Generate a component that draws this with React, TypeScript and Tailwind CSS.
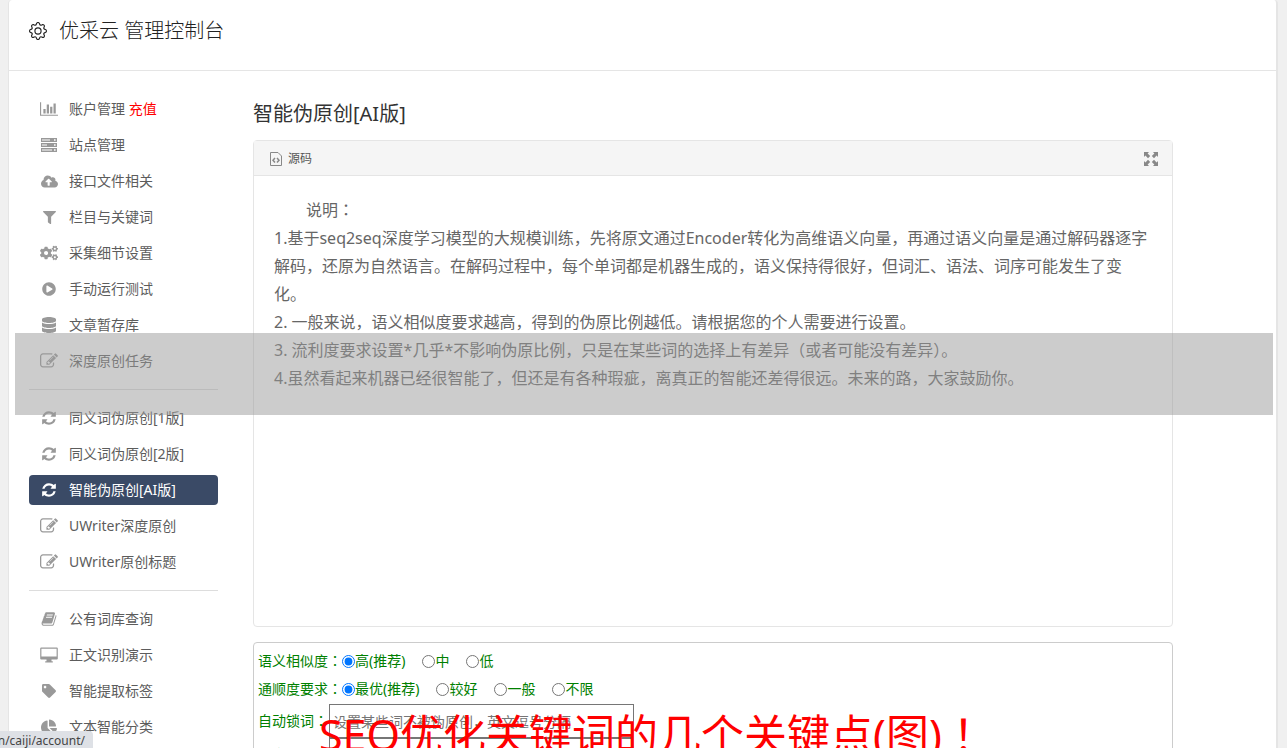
import React from 'react';
import { FaChartPie, FaCloudUploadAlt, FaCogs, FaDatabase, FaFilter, FaPlayCircle, FaTag } from 'react-icons/fa';
import { BsGear } from 'react-icons/bs';

type MenuItem = {
    label: string;
    icon: React.ReactNode;
    extra?: string;
    active?: boolean;
};

type RadioGroup = {
    name: string;
    label: string;
    options: string[];
};

const BarChartIcon = () => (
    <svg viewBox="0 0 2048 1792" width="18" height="16" fill="currentColor">
        <path d="M640 896v512h-256v-512h256zm384-512v1024h-256v-1024h256zm1024 1152v128h-2048v-1536h128v1408h1920zm-640-896v768h-256v-768h256zm384-384v1152h-256v-1152h256z" />
    </svg>
);

const ServerIcon = () => (
    <svg viewBox="0 0 16 14" width="16" height="14" fill="currentColor">
        <path fillRule="evenodd" d="M0 0h16v4H0zM1 1.4v1.2h8V1.4zM13 1.2v1.6h1.6V1.2zM0 5h16v4H0zM1 6.4v1.2h5V6.4zM13 6.2v1.6h1.6V6.2zM0 10h16v4H0zM1 11.4v1.2h10v-1.2zM13 11.2v1.6h1.6v-1.6z" />
    </svg>
);

const EditIcon = () => (
    <svg viewBox="0 0 1792 1792" width="18" height="18" fill="currentColor">
        <path d="M888 1184l116-116-152-152-116 116v56h96v96h56zm440-720q-16-16-33 1l-350 350q-17 17-1 33t33-1l350-350q17-17 1-33zm80 594v190q0 119-84.5 203.5t-203.5 84.5h-832q-119 0-203.5-84.5t-84.5-203.5v-832q0-119 84.5-203.5t203.5-84.5h832q63 0 117 25 15 7 18 23 3 17-9 29l-49 49q-14 14-32 8-23-6-45-6h-832q-66 0-113 47t-47 113v832q0 66 47 113t113 47h832q66 0 113-47t47-113v-126q0-13 9-22l64-64q15-15 35-7t20 29zm-96-738l288 288-672 672h-288v-288zm444 132l-92 92-288-288 92-92q28-28 68-28t68 28l152 152q28 28 28 68t-28 68z" />
    </svg>
);

const RefreshIcon = () => (
    <svg viewBox="0 0 1792 1792" width="16" height="16" fill="currentColor">
        <path d="M1639 1056q0 5-1 7-64 268-268 434.5t-478 166.5q-146 0-282.5-55t-243.5-157l-129 129q-19 19-45 19t-45-19-19-45v-448q0-26 19-45t45-19h448q26 0 45 19t19 45-19 45l-137 137q71 66 161 102t187 36q134 0 250-65t186-179q11-17 53-117 8-23 30-23h192q13 0 22.5 9.5t9.5 22.5zm25-800v448q0 26-19 45t-45 19h-448q-26 0-45-19t-19-45 19-45l138-138q-148-137-349-137-134 0-250 65t-186 179q-11 17-53 117-8 23-30 23h-199q-13 0-22.5-9.5t-9.5-22.5v-7q65-268 270-434.5t480-166.5q146 0 284 55.5t245 156.5l130-129q19-19 45-19t45 19 19 45z" />
    </svg>
);

const BookIcon = () => (
    <svg viewBox="0 0 1792 1792" width="16" height="16" fill="currentColor">
        <path d="M1703 478q40 57 18 129l-275 906q-19 64-76.5 107.5t-122.5 43.5h-923q-77 0-148.5-53.5t-99.5-131.5q-24-67-2-127 0-4 3-27t4-37q1-8-3-21.5t-3-19.5q2-11 8-21t16.5-23.5 16.5-23.5q23-38 45-91.5t30-91.5q3-10 .5-30t-.5-28q3-11 17-28t17-23q21-36 42-92t25-90q1-9-2.5-32t.5-28q4-13 22-30.5t22-22.5q19-26 42.5-84.5t27.5-96.5q1-8-3-25.5t-2-26.5q2-8 9-18t18-23 17-21q8-12 16.5-30.5t15-35 16-36 19.5-32 26.5-23.5 36-11.5 47.5 5.5l-1 3q38-9 51-9h761q74 0 114 56t18 130l-274 906q-36 119-71.5 153.5t-128.5 34.5h-869q-27 0-38 15-11 16-1 43 24 70 144 70h923q29 0 56-15.5t35-41.5l300-987q7-22 5-57 38 15 59 43zm-1064 2q-4 13 2 22.5t20 9.5h608q13 0 25.5-9.5t16.5-22.5l21-64q4-13-2-22.5t-20-9.5h-608q-13 0-25.5 9.5t-16.5 22.5zm-83 256q-4 13 2 22.5t20 9.5h608q13 0 25.5-9.5t16.5-22.5l21-64q4-13-2-22.5t-20-9.5h-608q-13 0-25.5 9.5t-16.5 22.5z" />
    </svg>
);

const DesktopIcon = () => (
    <svg viewBox="0 0 18 16" width="18" height="16" fill="currentColor">
        <path fillRule="evenodd" d="M1.2 0.5h15.6a1 1 0 0 1 1 1v10a1 1 0 0 1-1 1h-5.3v1.7h1.3v1.3H5.2v-1.3h1.3v-1.7H1.2a1 1 0 0 1-1-1v-10a1 1 0 0 1 1-1zM1.4 1.7v7.8h15.2V1.7z" />
    </svg>
);

const FileCodeIcon = () => (
    <svg viewBox="0 0 12 14" width="12" height="14" fill="none" stroke="currentColor">
        <path d="M0.5 0.5h7.5l3.5 3.5v9.5h-11z" />
        <path d="M5 6l-2 2.3 2 2.3M7 6l2 2.3-2 2.3" strokeWidth="1.5" />
    </svg>
);

const ExpandIcon = () => (
    <svg viewBox="0 0 14 14" width="14" height="14" fill="currentColor">
        <path d="M0 0h5L3.6 1.4 6.2 4 4 6.2 1.4 3.6 0 5zM14 0v5l-1.4-1.4L10 6.2 7.8 4l2.6-2.6L9 0zM0 14V9l1.4 1.4L4 7.8 6.2 10l-2.6 2.6L5 14zM14 14H9l1.4-1.4L7.8 10 10 7.8l2.6 2.6L14 9z" />
    </svg>
);

// Full-width colon or exclamation mark that sits in the middle of its cell
const Mark = ({ children }: { children: string }) => (
    <span lang="zh-Hant" className="font-['Noto_Sans_CJK_TC',sans-serif] leading-none">{children}</span>
);

const menuGroups: MenuItem[][] = [
    [
        { label: '账户管理', icon: <BarChartIcon />, extra: '充值' },
        { label: '站点管理', icon: <ServerIcon /> },
        { label: '接口文件相关', icon: <FaCloudUploadAlt size={17} /> },
        { label: '栏目与关键词', icon: <FaFilter size={13} /> },
        { label: '采集细节设置', icon: <FaCogs size={18} /> },
        { label: '手动运行测试', icon: <FaPlayCircle size={14} /> },
        { label: '文章暂存库', icon: <FaDatabase size={16} /> },
        { label: '深度原创任务', icon: <EditIcon /> },
    ],
    [
        { label: '同义词伪原创[1版]', icon: <RefreshIcon /> },
        { label: '同义词伪原创[2版]', icon: <RefreshIcon /> },
        { label: '智能伪原创[AI版]', icon: <RefreshIcon />, active: true },
        { label: 'UWriter深度原创', icon: <EditIcon /> },
        { label: 'UWriter原创标题', icon: <EditIcon /> },
    ],
    [
        { label: '公有词库查询', icon: <BookIcon /> },
        { label: '正文识别演示', icon: <DesktopIcon /> },
        { label: '智能提取标签', icon: <FaTag size={14} /> },
        { label: '文本智能分类', icon: <FaChartPie size={16} /> },
    ],
];

const radioGroups: RadioGroup[] = [
    { name: 'similarity', label: '语义相似度', options: ['高(推荐)', '中', '低'] },
    { name: 'fluency', label: '通顺度要求', options: ['最优(推荐)', '较好', '一般', '不限'] },
];

const Sidebar = () => (
    <nav className="w-[189px] shrink-0">
        {menuGroups.map((group, i) => (
            <ul key={i} className={i > 0 ? 'mt-[7px] space-y-1.5 border-t border-[#ddd] pt-[13px] pb-1.5' : 'space-y-1.5 pb-1.5'}>
                {group.map(item => (
                    <li key={item.label}>
                        <a
                            href="#"
                            className={`flex h-[30px] items-center rounded text-sm ${item.active ? 'bg-[#3a4a66] text-white' : 'text-[#5c5c5c]'}`}
                        >
                            <span className={`flex w-10 justify-center ${item.active ? 'text-white' : 'text-[#999]'}`}>{item.icon}</span>
                            <span>
                                {item.label}
                                {item.extra && <span className="text-[#f00]"> {item.extra}</span>}
                            </span>
                        </a>
                    </li>
                ))}
            </ul>
        ))}
    </nav>
);

const SourcePanel = () => (
    <section className="flex h-[487px] flex-col rounded border border-[#e5e5e5]">
        <div className="flex h-[35px] shrink-0 items-center justify-between border-b border-[#e5e5e5] bg-[#f5f5f5] pt-0.5 pr-3.5 pl-4 text-xs text-[#555]">
            <span className="flex items-center gap-1.5">
                <span className="text-[#888]"><FileCodeIcon /></span>
                源码
            </span>
            <button type="button" aria-label="全屏" className="text-[#888]">
                <ExpandIcon />
            </button>
        </div>
        <div className="px-5 py-5 text-base leading-7 text-[#666]">
            <p className="indent-8">说明<Mark>：</Mark></p>
            <p>1.基于seq2seq深度学习模型的大规模训练，先将原文通过Encoder转化为高维语义向量，再通过语义向量是通过解码器逐字解码，还原为自然语言。在解码过程中，每个单词都是机器生成的，语义保持得很好，但词汇、语法、词序可能发生了变化。</p>
            <p>2. 一般来说，语义相似度要求越高，得到的伪原比例越低。请根据您的个人需要进行设置。</p>
            <p>3. 流利度要求设置*几乎*不影响伪原比例，只是在某些词的选择上有差异（或者可能没有差异）。</p>
            <p>4.虽然看起来机器已经很智能了，但还是有各种瑕疵，离真正的智能还差得很远。未来的路，大家鼓励你。</p>
        </div>
    </section>
);

const OptionsForm = () => (
    <form className="mt-[15px] rounded border border-[#ccc] px-1 py-1 text-sm text-[green]">
        {radioGroups.map(group => (
            <fieldset key={group.name} className="flex h-7 items-center">
                <legend className="contents"><span>{group.label}<Mark>：</Mark></span></legend>
                {group.options.map((option, i) => (
                    <label key={option} className="mr-[17px] flex items-center">
                        <input type="radio" name={group.name} defaultChecked={i === 0} className="size-[13px]" />
                        {option}
                    </label>
                ))}
            </fieldset>
        ))}
        <div className="flex items-center pt-px">
            <label htmlFor="locked" className="w-[71px] whitespace-nowrap">自动锁词<Mark>：</Mark></label>
            <input
                id="locked"
                type="text"
                placeholder="设置某些词不被伪原创，英文逗号分隔"
                className="h-[34px] w-[305px] border border-[#767676] px-[3px] placeholder:text-[#757575]"
            />
        </div>
        <div className="flex items-center">
            <label htmlFor="title" className="w-[71px] whitespace-nowrap">文章标题<Mark>：</Mark></label>
            <input id="title" type="text" className="h-[34px] w-[305px] border border-[#767676] px-[3px]" />
        </div>
    </form>
);

export default function App() {
    return (
        <div className="relative h-screen overflow-hidden bg-[#f0f0f0] pr-[9px] pl-2 font-['Noto_Sans','Noto_Sans_CJK_SC',sans-serif]">
            <div className="min-h-screen rounded-t border-r-2 border-l border-[#e5e5e5] bg-white">
                <header className="flex h-[71px] items-center gap-3 border-b border-[#e5e5e5] px-5 pb-2 text-[#222]">
                    <BsGear size={18} />
                    <h1 className="text-xl font-light">优采云 管理控制台</h1>
                </header>
                <div className="flex gap-[35px] pt-[23px] pr-[103px] pl-5">
                    <Sidebar />
                    <main className="min-w-0 flex-1">
                        <h2 className="mb-1.5 h-10 text-xl leading-10 text-[#333]">智能伪原创[AI版]</h2>
                        <SourcePanel />
                        <OptionsForm />
                    </main>
                </div>
            </div>

            {/* banner strip and headline float above the page */}
            <div className="pointer-events-none absolute top-[333px] right-3.5 left-[15px] h-[82px] bg-[#999]/50" />
            <p className="pointer-events-none absolute top-[708px] left-[319px] text-[43px] leading-[54px] whitespace-nowrap text-[#f00]">
                SEO优化关键词的几个关键点(图)<Mark>！</Mark>
            </p>
            <div className="absolute bottom-0 left-0 flex h-[17px] w-[93px] justify-end overflow-hidden rounded-tr bg-[#dee1e6] pr-2 text-xs leading-5 text-[#444]">
                <span>n/caiji/account/</span>
            </div>
        </div>
    );
}
